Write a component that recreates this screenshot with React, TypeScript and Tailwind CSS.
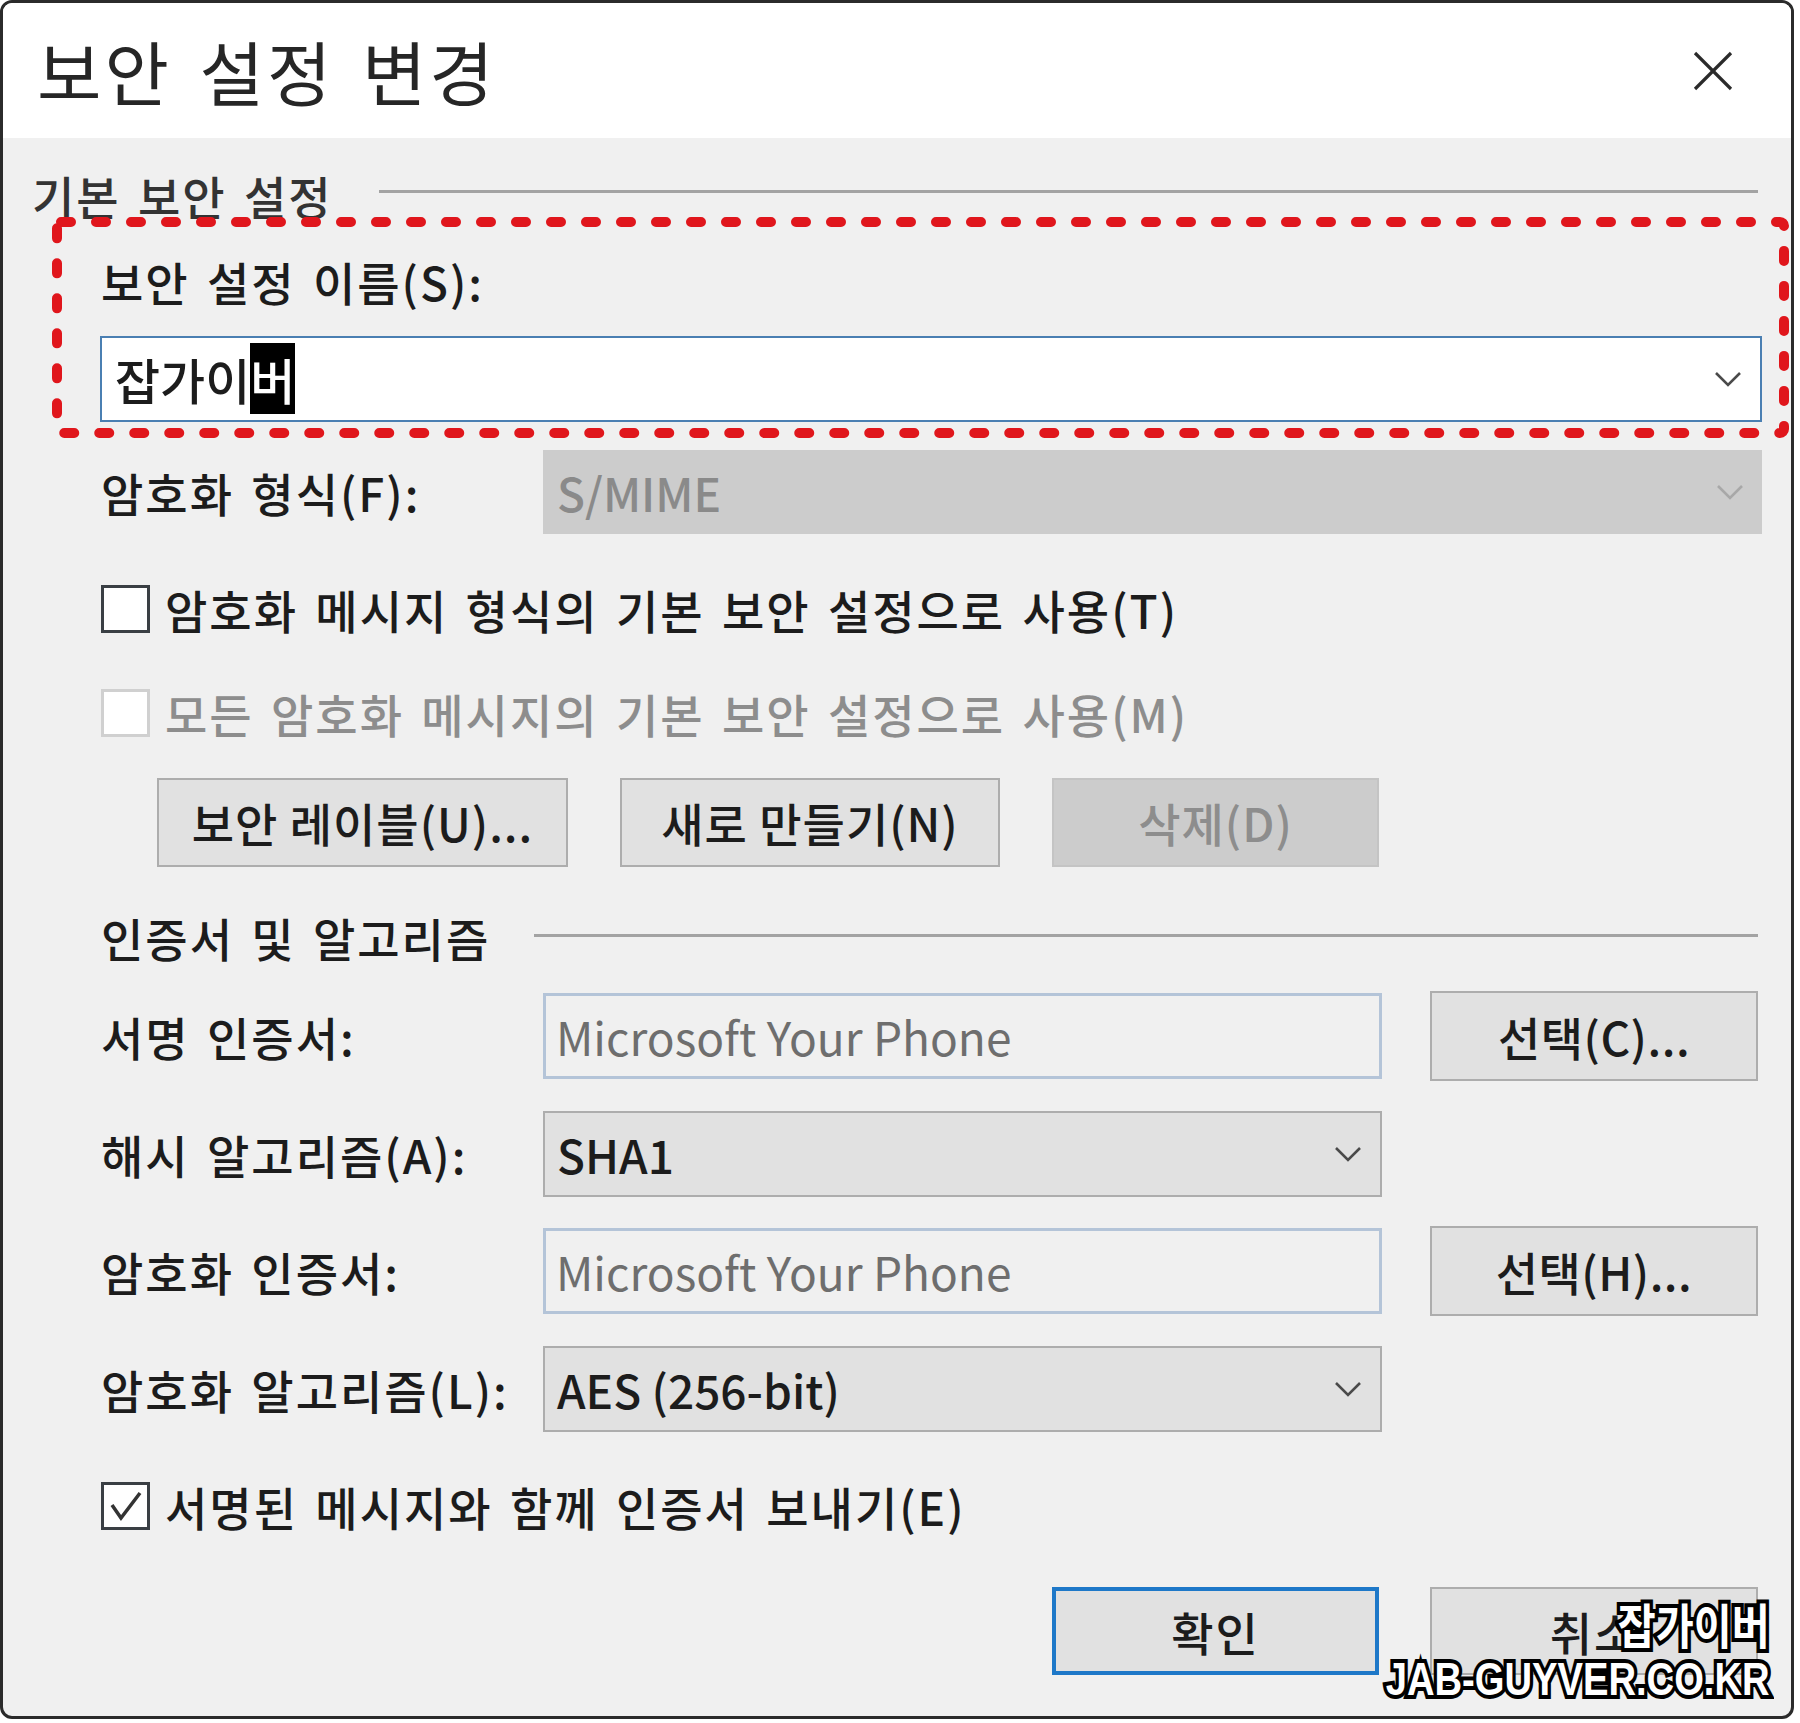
import React, { FC } from "react";

// Icons
const Chevron: FC<{ className?: string }> = ({ className }) => (
  <svg width="28" height="16" viewBox="0 0 28 16" className={className}>
    <polyline points="2,2 14,14 26,2" fill="none" stroke="currentColor" strokeWidth="2.6" />
  </svg>
);

const CloseIcon: FC = () => (
  <svg width="40" height="40" viewBox="0 0 40 40" className="text-[#2a2a2a]">
    <line x1="2" y1="2" x2="38" y2="38" stroke="currentColor" strokeWidth="3.2" />
    <line x1="38" y1="2" x2="2" y2="38" stroke="currentColor" strokeWidth="3.2" />
  </svg>
);

// Red annotation box drawn over the name field
const DottedBox: FC = () => (
  <svg
    width="1737"
    height="221"
    viewBox="0 0 1737 221"
    className="pointer-events-none absolute -left-[49px] -top-[36px]"
  >
    <rect
      x="5"
      y="5"
      width="1727"
      height="211"
      rx="4"
      fill="none"
      stroke="#e0161c"
      strokeWidth="10"
      strokeLinecap="round"
      strokeDasharray="10 25"
    />
  </svg>
);

const Checkbox: FC<{ checked?: boolean; disabled?: boolean }> = ({ checked, disabled }) => (
  <div
    className={
      disabled
        ? "flex h-[48px] w-[49px] shrink-0 items-center justify-center border-[3px] border-[#d0d0d0] bg-white"
        : "flex h-[48px] w-[49px] shrink-0 items-center justify-center border-[3px] border-[#3a3f44] bg-white"
    }
  >
    {checked && (
      <svg width="36" height="36" viewBox="0 0 36 36" className="text-[#333333]">
        <polyline points="4,17 13,30 32,5" fill="none" stroke="currentColor" strokeWidth="3.5" />
      </svg>
    )}
  </div>
);

// Types
interface CertRow {
  label: string;
  value: string;
  kind: "text" | "combo";
  button?: string;
}

const certRows: CertRow[] = [
  { label: "서명 인증서:", value: "Microsoft Your Phone", kind: "text", button: "선택(C)..." },
  { label: "해시 알고리즘(A):", value: "SHA1", kind: "combo" },
  { label: "암호화 인증서:", value: "Microsoft Your Phone", kind: "text", button: "선택(H)..." },
  { label: "암호화 알고리즘(L):", value: "AES (256-bit)", kind: "combo" },
];

const rowGaps = ["mt-[28px]", "mt-[32px]", "mt-[31px]", "mt-[32px]"];

const App: FC = () => {
  return (
    <div className="min-h-screen bg-white font-['Noto_Sans_CJK_KR','Noto_Sans',sans-serif] font-medium text-[#1c1c1c]">
      <div className="relative flex h-[1719px] w-[1794px] flex-col overflow-hidden rounded-[12px] border-[3px] border-[#2b2b2b] bg-[#f0f0f0]">
        {/* Title bar */}
        <div className="flex h-[135px] shrink-0 items-center justify-between bg-white pl-[34px] pr-[58px]">
          <h1 className="text-[70px] font-normal leading-none tracking-[3px] text-[#262626] [word-spacing:9px]">보안 설정 변경</h1>
          <CloseIcon />
        </div>

        {/* Body */}
        <div className="flex flex-col pl-[98px] pr-[33px] text-[46px] tracking-[2px] [word-spacing:5px]">
          {/* 기본 보안 설정 */}
          <div className="-ml-[69px] mt-[29px] flex h-[56px] items-center gap-[46px]">
            <span className="leading-[56px] text-[#333333]">기본 보안 설정</span>
            <div className="-mt-[8px] h-[3px] flex-1 bg-[#a3a3a3]" />
          </div>

          <div className="relative mt-[30px]">
            <div className="h-[56px] leading-[56px]">보안 설정 이름(S):</div>
            <div className="-ml-[1px] -mr-[4px] mt-[27px] flex h-[86px] items-center justify-between border-2 border-[#4a7fb2] bg-white pl-[13px] pr-[18px] text-[49px] tracking-normal">
              <span className="leading-[56px]">
                잡가이<span className="bg-black text-white">버</span>
              </span>
              <Chevron className="text-[#4a4a4a]" />
            </div>
            <DottedBox />
          </div>

          {/* 암호화 형식 */}
          <div className="mt-[28px] flex h-[84px] items-center">
            <span className="w-[442px] shrink-0">암호화 형식(F):</span>
            <div className="-mr-[4px] flex h-full flex-1 items-center justify-between bg-[#cccccc] pl-[14px] pr-[18px] tracking-normal text-[#8a8a8a] [word-spacing:normal]">
              <span>S/MIME</span>
              <Chevron className="text-[#a8a8a8]" />
            </div>
          </div>

          <div className="mt-[51px] flex h-[48px] items-center gap-[15px]">
            <Checkbox />
            <span>암호화 메시지 형식의 기본 보안 설정으로 사용(T)</span>
          </div>

          <div className="mt-[56px] flex h-[48px] items-center gap-[15px] text-[#8d8d8d]">
            <Checkbox disabled />
            <span>모든 암호화 메시지의 기본 보안 설정으로 사용(M)</span>
          </div>

          <div className="ml-[56px] mt-[41px] flex h-[89px] gap-[52px] tracking-[1px]">
            <button className="w-[411px] border-2 border-[#adadad] bg-[#e1e1e1]">보안 레이블(U)...</button>
            <button className="w-[380px] border-2 border-[#adadad] bg-[#e1e1e1]">새로 만들기(N)</button>
            <button className="w-[327px] border-2 border-[#c4c4c4] bg-[#cccccc] text-[#8d8d8d]">삭제(D)</button>
          </div>

          {/* 인증서 및 알고리즘 */}
          <div className="mt-[42px] flex h-[56px] items-center gap-[44px]">
            <span className="leading-[56px]">인증서 및 알고리즘</span>
            <div className="-mt-[4px] h-[3px] flex-1 bg-[#a3a3a3]" />
          </div>

          {certRows.map((row, i) => (
            <div key={row.label} className={`${rowGaps[i]} flex h-[86px] items-center`}>
              <span className="w-[442px] shrink-0">{row.label}</span>
              {row.kind === "text" ? (
                <div className="flex h-[86px] w-[839px] items-center border-[3px] border-[#b4c4d8] bg-[#f0f0f0] pl-[10px] font-normal tracking-normal text-[#6e6e6e] [word-spacing:normal]">
                  {row.value}
                </div>
              ) : (
                <div className="flex h-[86px] w-[839px] items-center justify-between border-2 border-[#adadad] bg-[#e1e1e1] pl-[12px] pr-[18px] tracking-normal [word-spacing:normal]">
                  <span>{row.value}</span>
                  <Chevron className="text-[#4a4a4a]" />
                </div>
              )}
              {row.button && (
                <button className="ml-[48px] h-[90px] w-[328px] shrink-0 border-2 border-[#adadad] bg-[#e1e1e1] tracking-[0.5px]">{row.button}</button>
              )}
            </div>
          ))}

          <div className="mt-[50px] flex h-[48px] items-center gap-[15px]">
            <Checkbox checked />
            <span>서명된 메시지와 함께 인증서 보내기(E)</span>
          </div>

          <div className="ml-[951px] mt-[57px] flex h-[88px] gap-[51px]">
            <button className="w-[327px] border-[4px] border-[#1e78c8] bg-[#e1e1e1]">확인</button>
            <button className="w-[328px] border-2 border-[#adadad] bg-[#e1e1e1]">취소</button>
          </div>
        </div>

        {/* Watermark */}
        <div className="pointer-events-none absolute bottom-[14px] right-[21px] flex flex-col items-end font-bold leading-none text-white [paint-order:stroke_fill] [-webkit-text-stroke:8px_#000]">
          <span className="origin-right scale-x-[0.86] text-[48px]">잡가이버</span>
          <span className="mt-[9px] origin-right scale-x-[0.83] font-['Liberation_Sans',sans-serif] text-[46px]">JAB-GUYVER.CO.KR</span>
        </div>
      </div>
    </div>
  );
};

export default App;
